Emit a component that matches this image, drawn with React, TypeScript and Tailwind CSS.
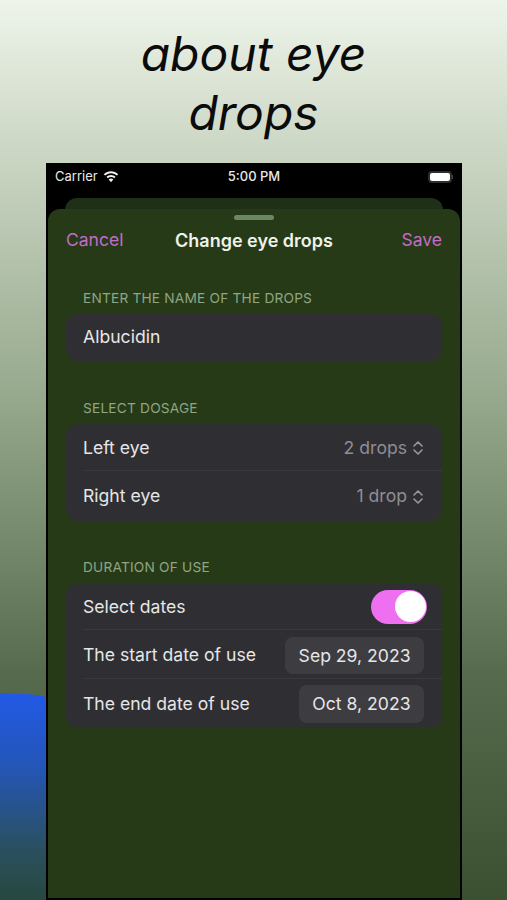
import React from "react";

const sf = "font-['Inter','Liberation_Sans',sans-serif]";

function Updown() {
  return (
    <svg width="12" height="16" viewBox="0 0 12 16" fill="none" stroke="#98989d" strokeWidth="1.6" strokeLinecap="round" strokeLinejoin="round">
      <path d="M2 6 L6 2 L10 6" />
      <path d="M2 10 L6 14 L10 10" />
    </svg>
  );
}

function Wifi() {
  return (
    <svg width="16" height="12" viewBox="0 0 16 12" fill="#f0f0f0">
      <path d="M8 2.2c2.3 0 4.400.9 5.900 2.400l1.300-1.400C13.300 1.300 10.800.2 8 .2S2.700 1.300.8 3.200l1.300 1.400C3.600 3.100 5.700 2.200 8 2.200z" />
      <path d="M8 5.900c1.200 0 2.300.5 3.200 1.300l1.300-1.400C11.300 4.600 9.700 3.900 8 3.900s-3.300.7-4.500 1.900l1.300 1.400C5.700 6.400 6.800 5.900 8 5.900z" />
      <path d="M8 7.600c-.9 0-1.700.3-2.300.9L8 11.200l2.300-2.700C9.700 7.900 8.900 7.600 8 7.600z" />
    </svg>
  );
}

function Row({ label, right, border }: { label: string; right: React.ReactNode; border?: boolean }) {
  return (
    <div className="relative flex h-[48.4px] items-center justify-between pl-[17px] pr-[18px]">
      <span className="text-[17.6px] text-[#e6e6e7]">{label}</span>
      {right}
      {border && <div className="absolute bottom-[1px] left-[17px] right-0 h-px bg-[#3a3a3e]" />}
    </div>
  );
}

function Header({ children, className }: { children: string; className: string }) {
  return <div className={`pl-[35px] text-[13.7px] leading-[18px] tracking-[0.2px] text-[#8fa583] ${className}`}>{children}</div>;
}

function Picker({ value }: { value: string }) {
  return (
    <span className="flex items-center gap-[5px] text-[17.6px] text-[#8e8e93]">
      {value}
      <Updown />
    </span>
  );
}

function DateChip({ value }: { value: string }) {
  return <span className="rounded-[8px] bg-[#3c3c41] px-[13.5px] py-[8px] text-[17.6px] leading-[21.500px] text-[#e6e6e7]">{value}</span>;
}

export default function App() {
  return (
    <div className="relative flex h-[900px] w-[507px] flex-col overflow-hidden bg-[linear-gradient(180deg,#eef4ea_0%,#c9d4c1_18%,#94a78b_45%,#566b4d_75%,#3a5030_100%)]">
      <div className="absolute bottom-0 left-0 h-[207px] w-[46px] rounded-tr-[46px_5px] bg-[linear-gradient(180deg,#2259e6_0%,#2456b8_35%,#2a5060_75%,#27483f_100%)]" />
      <h1 className="h-[163px] pt-[24px] text-center font-['Inter',sans-serif] text-[48px] italic leading-[59px] text-[#0b0b0b]">
        about eye
        <br />
        drops
      </h1>
      <div className={`relative ml-[46px] flex w-[416px] flex-1 flex-col bg-black ${sf}`}>
        <div className="flex h-[27px] items-center justify-between pl-[9px] pr-[9px] pt-[1px] text-[13px] text-[#e8e8e8]">
          <span className="flex items-center gap-[5px]">
            Carrier
            <Wifi />
          </span>
          <span className="absolute left-0 right-0 text-center text-[13px] font-medium">5:00 PM</span>
          <div className="flex items-center">
            <div className="h-[12px] w-[24px] rounded-[4px] border-2 border-[#2e2e2e] bg-white" />
            <div className="h-[4px] w-[1px] bg-[#444]" />
          </div>
        </div>
        <div className="mx-[19px] mt-[8px] h-[40px] rounded-t-[12px] bg-[#1f2f18]" />
        <div className="absolute bottom-[2px] left-[2px] right-[2px] top-[46px] rounded-t-[12px] bg-[#263a18]">
          <div className="mx-auto mt-[6px] h-[5px] w-[40px] rounded-full bg-[#6d8766]" />
          <div className="relative mt-[5px] flex h-[30px] items-center justify-between px-[18px] text-[17.500px]">
            <span className="text-[#c56bc9]">Cancel</span>
            <span className="absolute left-0 right-0 text-center text-[18px] font-semibold text-[#eef2e8]">Change eye drops</span>
            <span className="text-[#c56bc9]">Save</span>
          </div>
          <Header className="mt-[34px]">ENTER THE NAME OF THE DROPS</Header>
          <div className="mx-[18px] mt-[7px] flex h-[47px] items-center rounded-[12px] bg-[#2f2f33] pl-[17px] text-[17.6px] text-[#e6e6e7]">
            Albucidin
          </div>
          <Header className="mt-[38px]">SELECT DOSAGE</Header>
          <div className="mx-[18px] mt-[7px] rounded-[12px] bg-[#2f2f33]">
            <Row label="Left eye" right={<Picker value="2 drops" />} border />
            <Row label="Right eye" right={<Picker value="1 drop" />} />
          </div>
          <Header className="mt-[37px]">DURATION OF USE</Header>
          <div className="mx-[18px] mt-[7px] rounded-[12px] bg-[#2f2f33]">
            <Row
              label="Select dates"
              border
              right={
                <span className="-mr-[3px] flex h-[34px] w-[56px] items-center justify-end rounded-full bg-[#ee6ff0] pr-[1.500px]">
                  <span className="h-[31px] w-[31px] rounded-full bg-white" />
                </span>
              }
            />
            <Row label="The start date of use" right={<DateChip value="Sep 29, 2023" />} border />
            <Row label="The end date of use" right={<DateChip value="Oct 8, 2023" />} />
          </div>
        </div>
      </div>
    </div>
  );
}
